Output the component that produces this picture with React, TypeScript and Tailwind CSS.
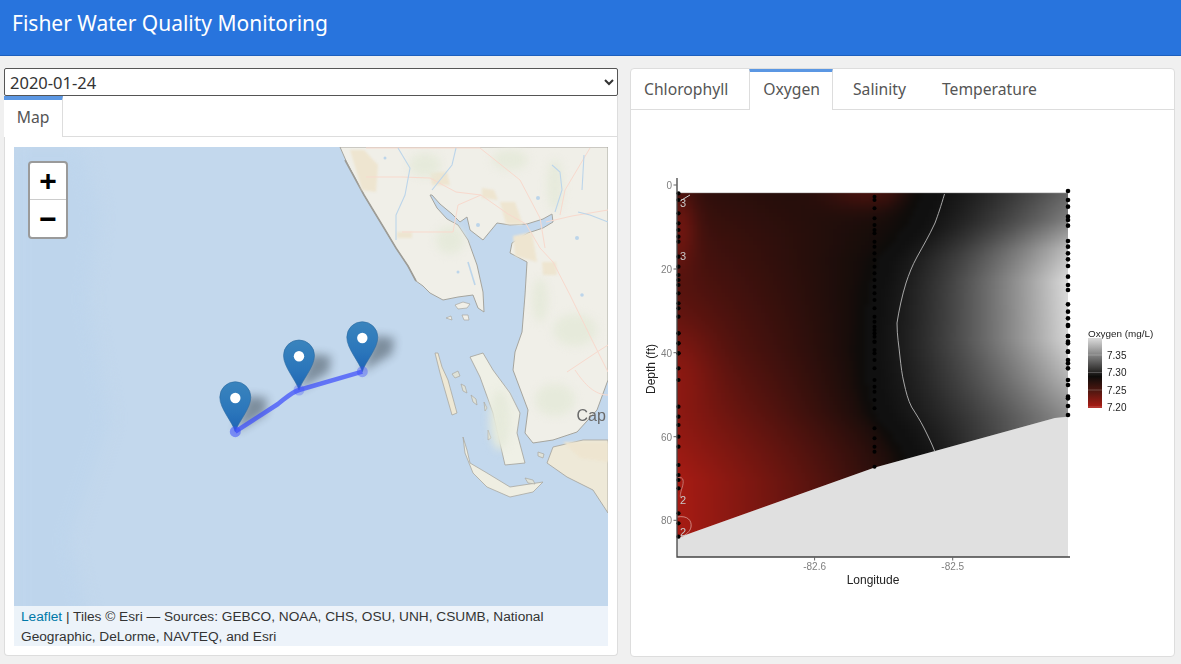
import { useMemo } from "react";

const uiFont = "font-['Noto_Sans',sans-serif]";

const lerpTable = (table: number[][], at: number) => {
  if (at <= table[0][0]) return table[0][1];
  for (let i = 1; i < table.length; i++) {
    if (at <= table[i][0]) {
      const [a, va] = table[i - 1];
      const [b, vb] = table[i];
      return va + ((vb - va) * (at - a)) / (b - a);
    }
  }
  return table[table.length - 1][1];
};

const blackLine = [[193, 924], [227, 906], [260, 877], [293, 868], [350, 863], [387, 867], [413, 874], [430, 888], [453, 903], [540, 925]];
const grayPeak = [[193, 0.42], [220, 0.55], [250, 0.85], [280, 1], [340, 0.97], [380, 0.8], [416, 0.62]];
const redDepth = [[193, 0.24], [240, 0.36], [350, 0.6], [480, 1], [540, 1]];

const bump = (x: number, y: number, cx: number, cy: number, sx: number, sy: number) =>
  Math.exp(-((x - cx) ** 2) / (2 * sx * sx) - ((y - cy) ** 2) / (2 * sy * sy));

const cellColor = (x: number, y: number) => {
  const bx = lerpTable(blackLine, y);
  if (x > bx) {
    const t = Math.max(0, (x - bx - 10) / (1068 - bx - 10));
    const g = 16 + 203 * Math.pow(t, 1.4) * lerpTable(grayPeak, y);
    return `rgb(${g | 0},${g | 0},${g | 0})`;
  }
  let r = Math.pow((bx - x) / (bx - 677), 0.85) * lerpTable(redDepth, y);
  r += 0.3 * bump(x, y, 870, 190, 32, 14) * Math.min(1, (bx - x) / 30);
  r += 0.3 * bump(x, y, 680, 225, 12, 28);
  r += 0.15 * bump(x, y, 680, 365, 25, 30);
  r = Math.min(1, r);
  const k = Math.min(1, (bx - x) / 14);
  return `rgb(${(14 + (168 - 14) * r * k) | 0},${(12 + 16 * r * k) | 0},${(10 + 10 * r * k) | 0})`;
};

const leftDots = [400, 420, 460, 490, 510, 530, 545, 590, 620, 645, 660, 675, 700, 730, 745, 770, 820, 850, 880].map((z) => 60 + z / 3)
  .concat([40, 70, 100, 145, 180, 260, 290, 315, 350, 380, 435, 465, 480, 505, 580, 610, 650].map((z) => 320 + z / 3));
const middleDots = [410, 420, 445, 475, 495, 510, 520, 545, 560, 580, 600, 620, 640, 660, 680, 700, 720, 745, 770, 800, 820, 845, 880].map((z) => 60 + z / 3)
  .concat([5, 30, 50, 65, 90, 120, 145, 180, 200, 215, 240, 265, 325, 355, 380, 395, 440].map((z) => 320 + z / 3));
const rightDots = [393, 420, 440, 470, 480, 497, 543, 560, 580, 598, 618, 650, 675, 690, 733, 755, 775, 798, 828, 850, 875].map((z) => 60 + z / 3)
  .concat([15, 48, 65, 95, 120, 130, 145, 180, 195, 230, 235, 258, 285].map((z) => 320 + z / 3));

const OxygenPlot = () => {
  const cells = useMemo(() => {
    const out: { x: number; y: number; fill: string }[] = [];
    for (let x = 673; x < 1072; x += 4) {
      for (let y = 189; y < 542; y += 4) {
        if (y - 6 > 538 - ((x - 677) * (538 - 416.7)) / (1068 - 677)) continue;
        out.push({ x, y, fill: cellColor(x + 2, y + 2) });
      }
    }
    return out;
  }, []);

  return (
    <svg viewBox="631 110 543 546" className="w-full h-full block">
      <defs>
        <clipPath id="field">
          <polygon points="677,193 1068,193 1068,416.7 1055,418 935,451 874,467.7 677,538" />
        </clipPath>
        <linearGradient id="legend" x1="0" y1="0" x2="0" y2="1">
          <stop offset="0" stopColor="#dcdcdc" />
          <stop offset="0.3" stopColor="#6e6e6e" />
          <stop offset="0.55" stopColor="#0e0c0a" />
          <stop offset="0.75" stopColor="#4e1710" />
          <stop offset="1" stopColor="#b01c14" />
        </linearGradient>
      </defs>
      <g style={{ filter: "blur(0.5px)" }}>
        <polygon points="677,538 874,467.7 935,451 1055,418 1068,416.7 1068,557 677,557" fill="#e0e0e0" />
        <g clipPath="url(#field)">
          <g style={{ filter: "blur(2px)" }}>
            {cells.map((c) => (
              <rect key={`${c.x}-${c.y}`} x={c.x} y={c.y} width={4.2} height={4.2} fill={c.fill} />
            ))}
          </g>
        </g>
        <line x1="677" y1="192.6" x2="1068" y2="192.6" stroke="#d8d8d8" strokeWidth="1" />
        <path d="M944.5 194 C941 206 938 215 935 223 C929 236 923 246 917 257 C912 266 909 274 906 283 C902 296 899 310 897 323 C897 336 899 346 900 357 C901 366 902 375 904 383 C906 392 908 400 911.6 407 C916 414 920 420 924 428 C928 436 932 444 935 452" fill="none" stroke="#b8b8b8" strokeWidth="0.9" />
        <path d="M678 478 C684 476 684 482 682 488 C680 494 680 498 681 497" fill="none" stroke="#c98a85" strokeWidth="0.8" />
        <path d="M677 517 C688 515 692 521 691 527 C690 532 686 534 682 537" fill="none" stroke="#d8a09b" strokeWidth="0.8" />
        <path d="M680 201 L690 195" stroke="#cfcfcf" strokeWidth="1" />
        <g fontFamily="'Liberation Sans',sans-serif" fontSize="11" fill="#c9c9c9" textAnchor="middle">
          <text x="683" y="207">3</text>
          <text x="683" y="260">3</text>
          <text x="683" y="504">2</text>
          <text x="683" y="536">2</text>
        </g>
        {leftDots.map((y) => <circle key={`l${y}`} cx="678.5" cy={y} r="2.1" fill="#000" />)}
        {middleDots.map((y) => <circle key={`m${y}`} cx="874.5" cy={y} r="2" fill="#000" />)}
        {rightDots.map((y) => <circle key={`r${y}`} cx="1068" cy={y} r="2.3" fill="#000" />)}
        <path d="M677 178 V557 H1070" fill="none" stroke="#444" strokeWidth="1.3" />
        <g stroke="#666" strokeWidth="1">
          {[185, 269, 352.7, 436.7, 520.3].map((y) => <line key={y} x1="673.5" x2="677" y1={y} y2={y} />)}
          {[814.6, 952.7].map((x) => <line key={x} x1={x} x2={x} y1="557" y2="560.5" />)}
        </g>
        <g fontFamily="'Liberation Sans',sans-serif" fontSize="10" fill="#7f7f7f">
          <g textAnchor="end">
            <text x="672" y="189">0</text>
            <text x="672" y="273">20</text>
            <text x="672" y="356.5">40</text>
            <text x="672" y="440.5">60</text>
            <text x="672" y="524">80</text>
          </g>
          <g textAnchor="middle">
            <text x="814.6" y="570">-82.6</text>
            <text x="952.7" y="570">-82.5</text>
          </g>
        </g>
        <g fontFamily="'Liberation Sans',sans-serif" fill="#222">
          <text x="873" y="584" fontSize="12" textAnchor="middle">Longitude</text>
          <text transform="translate(655 369) rotate(-90)" fontSize="12" textAnchor="middle">Depth (ft)</text>
          <text x="1088" y="336.5" fontSize="9.9">Oxygen (mg/L)</text>
        </g>
        <rect x="1088" y="338" width="14" height="70" fill="url(#legend)" />
        <g stroke="#fff" strokeWidth="0.5" opacity="0.45">
          {[355, 372.5, 390, 407].map((y) => <line key={y} x1="1088" x2="1102" y1={y} y2={y} />)}
        </g>
        <g fontFamily="'Liberation Sans',sans-serif" fontSize="10" fill="#222">
          <text x="1107" y="358.5">7.35</text>
          <text x="1107" y="376">7.30</text>
          <text x="1107" y="393.5">7.25</text>
          <text x="1107" y="410.5">7.20</text>
        </g>
      </g>
    </svg>
  );
};

const Marker = ({ x, y }: { x: number; y: number }) => (
  <g transform={`translate(${x} ${y})`}>
    <path d="M0 0 L30 -18 L32 -34 L12 -36 Z" fill="#1d2830" opacity="0.42" style={{ filter: "blur(5px)" }} />
    <path d="M0 0 C-3 -10 -15.5 -23 -15.5 -34.5 A15.5 15.5 0 1 1 15.5 -34.5 C15.5 -23 3 -10 0 0 Z" fill="url(#pin)" stroke="#2b6a9f" strokeWidth="0.6" />
    <circle cx="0" cy="-33.7" r="5.2" fill="#fff" />
  </g>
);

const FisherMap = () => (
  <svg viewBox="14 147 594 499" className="w-full h-full block">
    <defs>
      <linearGradient id="pin" x1="0" y1="0" x2="0" y2="1">
        <stop offset="0" stopColor="#3a84bd" />
        <stop offset="0.6" stopColor="#2b76bb" />
        <stop offset="1" stopColor="#1d64b4" />
      </linearGradient>
    </defs>
    <rect x="14" y="147" width="594" height="499" fill="#c3d8ed" />
    {/* shelf shading out in the gulf */}
    <g style={{ filter: "blur(8px)" }}>
      <path d="M14 148 H82 L100 215 L88 300 L110 420 L70 540 L95 646 H14 Z" fill="#bed5ec" />
    </g>
    <g style={{ filter: "blur(0.5px)" }}>
      <path
        d="M340 147 L347 163 L355 178 L364 195 L373 210 L384 228 L396 248 L408 266 L416 281 L423 286 L430 293 L443 300 L458 297 L473 295 L478 308 L484 312 L483 292 L477 265 L468 240 L458 225 L447 219 L437 208 L430 195 L432 195 L440 204 L452 214 L460 222 L467 217 L470 230 L483 240 L497 223 L510 225 L527 224 L543 219 L552 214 L553 222 L543 228 L528 233 L512 243 L510 253 L527 262 L525 295 L522 332 L515 352 L513 370 L528 410 L525 433 L533 443 L553 440 L577 432 L597 410 L608 380 L608 147 Z"
        fill="#f0efe8"
        stroke="#a5a49d"
        strokeWidth="1"
      />
      <path d="M345 160 L364 195 L384 228 L396 248 L408 266 L416 281" fill="none" stroke="#9d9c96" strokeWidth="1.6" />
      <path d="M608 440 L583 440 L553 447 L547 463 L567 477 L593 490 L608 513 Z" fill="#eee9d8" stroke="#a9a8a1" strokeWidth="0.9" />
      <path d="M470 357 L483 353 L493 370 L510 393 L520 413 L517 433 L525 463 L505 465 L493 413 L480 377 Z" fill="#eff0e6" stroke="#a9a8a1" strokeWidth="0.9" />
      <path d="M435 353 L438 353 L442 367 L448 380 L457 413 L452 415 L440 373 Z" fill="#eee8d5" stroke="#a9a8a1" strokeWidth="0.8" />
      <path d="M463 437 L467 450 L470 463 L487 473 L510 487 L543 482 L533 492 L510 497 L487 487 L473 473 L465 453 Z" fill="#efeee2" stroke="#a9a8a1" strokeWidth="0.8" />
      <path d="M452 374 l6 -3 l2 5 l-5 2 Z M461 384 l4 2 l2 7 l-4 -2 Z M471 395 l5 4 l1 6 l-4 -3 Z M484 402 l3 6 l-2 3 Z M488 430 l3 8 l-3 2 Z M525 478 l8 2 l2 4 l-7 -1 Z M538 452 l6 2 l-1 4 l-5 -2 Z" fill="#dfe2d8" stroke="#a9a8a1" strokeWidth="0.7" />
      <path d="M455 305 l8 -3 l7 2 l-3 4 l-9 1 Z M446 318 l5 -2 l1 4 Z M462 315 l6 0 l1 5 l-5 0 Z" fill="#f0efe8" stroke="#a9a8a1" strokeWidth="0.7" />
      <g fill="#eee5d0" style={{ filter: "blur(1px)" }}>
        <path d="M350 150 H364 L378 165 L376 192 L362 190 Z" />
        <path d="M430 172 H447 L450 185 H432 Z" />
        <path d="M482 188 L494 190 L498 200 L482 198 Z" />
        <path d="M500 202 H515 L523 225 L506 224 Z" />
        <path d="M513 236 L532 232 L537 262 L515 256 Z" />
        <path d="M397 232 L412 232 L412 238 L397 238 Z" />
        <path d="M542 262 H556 L557 275 L543 275 Z" />
        <path d="M563 442 H608 V462 L580 458 Z" />
      </g>
      <g fill="#e6eadb" style={{ filter: "blur(4px)" }}>
        <ellipse cx="425" cy="165" rx="16" ry="12" />
        <ellipse cx="510" cy="160" rx="18" ry="10" />
        <ellipse cx="555" cy="185" rx="8" ry="26" />
        <ellipse cx="540" cy="300" rx="8" ry="22" />
        <ellipse cx="575" cy="330" rx="22" ry="16" />
        <ellipse cx="450" cy="240" rx="14" ry="14" />
        <ellipse cx="500" cy="420" rx="10" ry="30" />
        <ellipse cx="555" cy="400" rx="20" ry="16" />
      </g>
      <g fill="none" stroke="#f8d9cd" strokeWidth="1">
        <path d="M366 177 H402 L430 178 L456 192 L481 195 L508 214 L526 224 L540 248 L553 262 L570 295 L592 340 L608 372" />
        <path d="M402 232 H453 L458 205 L481 195" />
        <path d="M366 148 H480 L520 180 L540 218 L545 248" />
        <path d="M546 222 L572 216 L608 210" />
        <path d="M567 372 L597 352 L608 345" />
        <path d="M575 370 C585 385 595 395 608 395" />
        <path d="M590 148 L565 190 L560 215" />
      </g>
      <g fill="none" stroke="#bcd5ea" strokeWidth="1.1">
        <path d="M398 148 L410 168 L405 195 L396 215 L396 240" />
        <path d="M456 148 L452 165 L432 190" />
        <path d="M552 165 L560 172 L562 190 L555 212" />
        <path d="M578 212 L590 215 L608 222" />
        <path d="M468 262 L475 285" strokeWidth="1.6" />
        <path d="M584 155 L582 190" />
      </g>
      <g fill="#bcd5ea">
        <circle cx="385" cy="158" r="1.5" />
        <circle cx="478" cy="225" r="2" />
        <circle cx="538" cy="198" r="2" />
        <circle cx="577" cy="238" r="2" />
        <circle cx="458" cy="272" r="1.5" />
        <circle cx="582" cy="295" r="1.8" />
      </g>
      <text x="576.5" y="420.5" fontFamily="'Liberation Sans',sans-serif" fontSize="16" fill="#6a6a6a">Cap</text>
    </g>
    <g style={{ filter: "blur(0.4px)" }}>
      <Marker x={235.3} y={431.7} />
      <Marker x={299} y={390} />
      <Marker x={362.3} y={371.7} />
      <path d="M235.3 431.7 L278 404 C287 397 292 392 299 390 L362.3 371.7" fill="none" stroke="#3d4dfb" strokeOpacity="0.72" strokeWidth="4.5" strokeLinejoin="round" />
      <circle cx="235.3" cy="431.7" r="5.5" fill="#3d4dfb" fillOpacity="0.55" />
      <circle cx="299" cy="390" r="5.5" fill="#3d4dfb" fillOpacity="0.3" />
      <circle cx="362.3" cy="371.7" r="5.5" fill="#3d4dfb" fillOpacity="0.4" />
    </g>
  </svg>
);

const App = () => {
  return (
    <div className={`w-[1181px] h-[664px] overflow-hidden bg-[#f0f0f0] ${uiFont}`}>
      <header className="h-[56px] bg-[#2874dd] border-b border-[#1d5fbd] pl-3 pt-[6px]">
        <h1 className="text-[21px] leading-[34px] text-white">Fisher Water Quality Monitoring</h1>
      </header>
      <main className="flex items-start pl-1 pt-3 gap-3">
        <section className="w-[614px] flex flex-col">
          <select className="h-7 w-full bg-white border border-[#555] rounded-[2px] pl-[1px] text-[16.5px] text-[#333]" defaultValue="2020-01-24">
            <option>2020-01-24</option>
          </select>
          <div className="bg-white border border-t-0 border-[#ddd] rounded-b-[4px]">
            <div className="flex h-[41px] border-b border-[#ddd]">
              <div className="w-[59px] -ml-px border-t-4 border-[#5b97e3] border-r border-r-[#ddd] h-[41px] bg-white text-center text-[15.7px] leading-[34px] text-[#555]">Map</div>
            </div>
            <div className="pt-[10px] pb-[9px] pl-[9px] pr-[9px]">
              <div className="relative h-[499px] overflow-hidden">
                <FisherMap />
                <div className="absolute left-[14px] top-[14px] w-[40px] h-[78px] border-2 border-[#9a9a9a] rounded-[4px] bg-white overflow-hidden">
                  <div className="h-[37px] border-b border-[#ccc] flex items-center justify-center text-[30px] font-bold leading-none text-black font-['Liberation_Sans',sans-serif]">+</div>
                  <div className="h-[37px] flex items-center justify-center text-[30px] font-bold leading-none text-black font-['Liberation_Sans',sans-serif]">−</div>
                </div>
                <div className="absolute left-0 right-0 bottom-0 h-10 bg-white/70 px-[7px] pt-px text-[13.7px] leading-5 text-[#333] font-['Liberation_Sans',sans-serif]">
                  <span className="text-[#0078a8]">Leaflet</span> | Tiles © Esri — Sources: GEBCO, NOAA, CHS, OSU, UNH, CSUMB, National<br />
                  Geographic, DeLorme, NAVTEQ, and Esri
                </div>
              </div>
            </div>
          </div>
        </section>
        <section className="w-[545px] h-[589px] bg-white border border-[#ddd] rounded-[4px] flex flex-col overflow-hidden">
          <nav className="flex h-[41px] shrink-0 -ml-px border-b border-[#ddd] text-[15.7px] text-[#555]">
            <div className="pl-3.5 pr-[15px] mr-1.5 pt-[3px] leading-[34px]">Chlorophyll</div>
            <div className="pl-[13px] pr-3 mr-1.5 -mt-px h-[42px] border-t-4 border-[#5b97e3] border-x border-x-[#ddd] bg-white leading-[34px]">Oxygen</div>
            <div className="px-3.5 mr-2 pt-[3px] leading-[34px]">Salinity</div>
            <div className="px-3.5 mr-1.5 pt-[3px] leading-[34px]">Temperature</div>
          </nav>
          <div className="flex-1 min-h-0">
            <OxygenPlot />
          </div>
        </section>
      </main>
    </div>
  );
};

export default App;
